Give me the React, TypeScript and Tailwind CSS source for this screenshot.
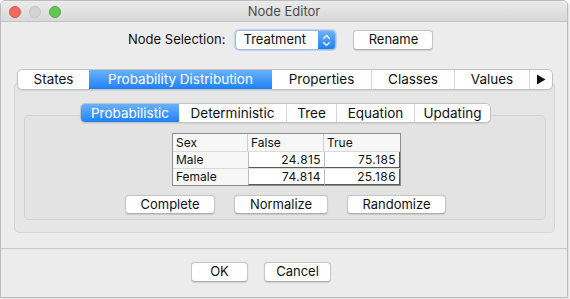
import React from "react";

function Btn({ w, h = 19, children }: { w: number; h?: number; children: React.ReactNode }) {
  return (
    <div
      className="flex items-center justify-center rounded-[4px] border border-[#c6c6c6] border-b-[#b0b0b0] bg-white text-[13px] text-[#111] shadow-[0_0.5px_1px_rgba(0,0,0,0.12)]"
      style={{ width: w, height: h }}
    >
      {children}
    </div>
  );
}

function Tabs({ items, height }: { items: { label: React.ReactNode; w: number; sel?: boolean }[]; height: number }) {
  return (
    <div
      className="relative z-10 flex overflow-hidden rounded-[5px] border border-[#c3c3c3] bg-white shadow-[0_1px_1px_rgba(0,0,0,0.08)]"
      style={{ height }}
    >
      {items.map((t, i) => (
        <div
          key={i}
          className={
            t.sel
              ? "flex shrink-0 items-center justify-center bg-gradient-to-b from-[#69b1fa] to-[#1b80fa] text-[13.5px] text-white"
              : "flex shrink-0 items-center justify-center text-[13.5px] text-[#111] " +
                (i > 0 && !items[i - 1].sel ? "border-l border-[#d6d6d6]" : "")
          }
          style={{ width: t.w }}
        >
          {t.label}
        </div>
      ))}
    </div>
  );
}

export default function App() {
  return (
    <div className="relative h-[299px] w-[570px] bg-white font-['Inter','Noto_Sans',sans-serif] antialiased">
      <div className="flex h-[298px] w-[568px] flex-col overflow-hidden rounded-t-[5px] border border-[#bdbdbd] bg-[#ececec] shadow-[1px_1px_2px_rgba(0,0,0,0.15)]">
        {/* title bar */}
        <div className="relative flex h-[21px] shrink-0 items-center justify-center border-b border-[#c4c4c4] bg-gradient-to-b from-[#ebebeb] to-[#d8d8d8]">
          <div className="absolute left-[8px] top-[5px] flex gap-[8px]">
            <div className="h-[12px] w-[12px] rounded-full bg-[#ee6a5f] border border-[#d9564b]" />
            <div className="h-[12px] w-[12px] rounded-full bg-[#d3d3d3] border border-[#c4c4c4]" />
            <div className="h-[12px] w-[12px] rounded-full bg-[#62c554] border border-[#52ad44]" />
          </div>
          <span className="pt-[2px] text-[13px] text-[#4d4d4d]">Node Editor</span>
        </div>

        {/* node selection */}
        <div className="mt-[8px] flex h-[20px] items-center pl-[127px]">
          <span className="text-[13px] text-[#111]">Node Selection:</span>
          <div className="ml-[10px] flex h-[20px] w-[101px] items-center overflow-hidden rounded-[4px] border border-[#9fbdea] bg-white shadow-[0_0_0_1px_rgba(120,170,240,0.35)]">
            <span className="flex-1 pl-[7px] text-[13px] text-[#111]">Treatment</span>
            <div className="flex h-full w-[17px] items-center justify-center bg-gradient-to-b from-[#6ab1fb] to-[#1a7ffa]">
              <svg width="9" height="13" viewBox="0 0 9 13" fill="none" stroke="white" strokeWidth="1.3" strokeLinecap="round" strokeLinejoin="round">
                <path d="M1.5 4.5 L4.5 1.5 L7.5 4.5" />
                <path d="M1.5 8.5 L4.5 11.5 L7.5 8.5" />
              </svg>
            </div>
          </div>
          <div className="ml-[17px]">
            <Btn w={80} h={20}>Rename</Btn>
          </div>
        </div>

        {/* outer tabbed pane */}
        <div className="mt-[19px] ml-[16px] w-[536px]">
          <Tabs
            height={21}
            items={[
              { label: "States", w: 71 },
              { label: "Probability Distribution", w: 183, sel: true },
              { label: "Properties", w: 99 },
              { label: "Classes", w: 83 },
              { label: "Values", w: 75 },
              {
                label: (
                  <svg width="10" height="11" viewBox="0 0 10 11">
                    <polygon points="1,0.5 9.5,5.5 1,10.5" fill="#111" />
                  </svg>
                ),
                w: 23,
              },
            ]}
          />
        </div>
        <div className="-mt-[8px] ml-[13px] h-[151px] w-[541px] rounded-[5px] border border-[#d6d6d6] bg-[#e6e6e6]">
          <div className="ml-[65px] mt-[20px] w-[411px]">
            <Tabs
              height={20}
              items={[
                { label: "Probabilistic", w: 98, sel: true },
                { label: "Deterministic", w: 107 },
                { label: "Tree", w: 50 },
                { label: "Equation", w: 78 },
                { label: "Updating", w: 76 },
              ]}
            />
          </div>
          <div className="-mt-[8px] ml-[9px] h-[105px] w-[522px] rounded-[5px] border border-[#d3d3d3] bg-[#e3e3e3]">
            {/* table */}
            <div className="ml-[147px] mt-[17px] w-[229px] border border-[#8f8f8f] bg-white text-[12px] text-[#111]">
              <div className="flex h-[17px] bg-[#f7f7f7]">
                <div className="flex w-[75px] items-center border-r border-[#d0d0d0] pl-[3px]">Sex</div>
                <div className="flex w-[76px] items-center border-r border-[#d0d0d0] pl-[3px]">False</div>
                <div className="flex flex-1 items-center pl-[3px]">True</div>
              </div>
              {[
                ["Male", "24.815", "75.185"],
                ["Female", "74.814", "25.186"],
              ].map((r) => (
                <div key={r[0]} className="flex h-[17px] border-t border-[#dadada]">
                  <div className="flex w-[75px] items-center bg-[#f7f7f7] pl-[3px]">{r[0]}</div>
                  <div className="flex w-[76px] items-center justify-end border-b border-l border-b-[#5a5a5a] border-l-[#bdbdbd] bg-white pr-[3px] tracking-[0.4px]">{r[1]}</div>
                  <div className="flex flex-1 items-center justify-end border-b border-l border-r border-b-[#5a5a5a] border-l-[#bdbdbd] border-r-[#5a5a5a] bg-white pr-[3px] tracking-[0.4px]">{r[2]}</div>
                </div>
              ))}
            </div>
            {/* buttons */}
            <div className="ml-[100px] mt-[9px] flex gap-[19px]">
              <Btn w={90}>Complete</Btn>
              <Btn w={94}>Normalize</Btn>
              <Btn w={99}>Randomize</Btn>
            </div>
          </div>
        </div>

        {/* separator */}
        <div className="mt-[15px] border-t border-[#c9c9c9]" />
        <div className="mt-[13px] flex pl-[190px] gap-[16px]">
          <Btn w={57} h={20}>OK</Btn>
          <Btn w={67} h={20}>Cancel</Btn>
        </div>
      </div>
    </div>
  );
}
